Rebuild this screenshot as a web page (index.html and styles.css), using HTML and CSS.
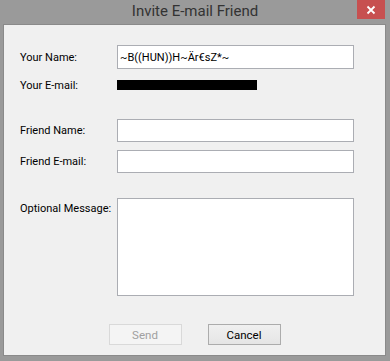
FILE: index.html
```html
<!DOCTYPE html>
<html>
<head>
<meta charset="utf-8">
<link rel="stylesheet" href="styles.css">
</head>
<body>
<div class="window">
  <div class="titlebar">
    <span></span>
    <div class="title">Invite E-mail Friend</div>
    <div class="close"><svg width="10" height="10" viewBox="0 0 10 10"><path d="M1.5 1.5 L8.5 8.5 M8.5 1.5 L1.5 8.5" stroke="#fff" stroke-width="1.8" fill="none"/></svg></div>
  </div>
  <div class="content">
    <div class="row row-name">
      <label class="label">Your Name:</label>
      <div class="input">~B((HUN))H~Är€sZ*~</div>
    </div>
    <div class="row row-email">
      <label class="label">Your E-mail:</label>
      <div class="redact-cell"><div class="redact"></div></div>
    </div>
    <div class="row row-fname">
      <label class="label">Friend Name:</label>
      <div class="input"></div>
    </div>
    <div class="row row-femail">
      <label class="label">Friend E-mail:</label>
      <div class="input"></div>
    </div>
    <div class="row row-msg">
      <label class="label label-top">Optional Message:</label>
      <div class="textarea"></div>
    </div>
    <div class="buttons">
      <button class="btn btn-disabled">Send</button>
      <button class="btn">Cancel</button>
    </div>
  </div>
</div>
</body>
</html>
```
FILE: styles.css
```css
html, body {
  margin: 0;
  padding: 0;
}
body {
  background: #9a9a9a;
  font-family: Roboto, "Noto Sans", sans-serif;
  font-size: 11px;
  color: #000;
}
.window {
  width: 390px;
  height: 361px;
  display: flex;
  flex-direction: column;
}
.titlebar {
  height: 24px;
  display: grid;
  grid-template-columns: 1fr auto 1fr;
  align-items: start;
}
.title {
  font-size: 15px;
  color: #333;
  line-height: 22px;
}
.close {
  justify-self: end;
  width: 28px;
  height: 19px;
  margin-right: 5px;
  background: #c75050;
  display: flex;
  align-items: center;
  justify-content: center;
}
.close svg { display: block; }
.content {
  margin: 0 4px 5px 3px;
  flex: 1;
  background: #f0f0f0;
  border: 1px solid #8a8a8a;
  display: flex;
  flex-direction: column;
  padding: 20px 0 0 16px;
}
.row {
  display: grid;
  grid-template-columns: 97px 237px;
}
.row-name { height: 24px; }
.row-email { height: 18px; margin-top: 7px; }
.row-fname { height: 23px; margin-top: 25px; }
.row-femail { height: 23px; margin-top: 8px; }
.row-msg { height: 98px; margin-top: 25px; }
.label {
  display: flex;
  align-items: center;
  color: #000;
}
.label-top {
  align-items: flex-start;
  padding-top: 4px;
}
.input, .textarea {
  background: #fff;
  border: 1px solid #abadb3;
  box-sizing: border-box;
}
.input {
  display: flex;
  align-items: center;
  padding-left: 2px;
  font-size: 11px;
}
.redact-cell {
  display: flex;
  align-items: center;
}
.redact {
  width: 140px;
  height: 10px;
  background: #000;
}
.buttons {
  display: flex;
  justify-content: center;
  gap: 26px;
  margin-top: 28px;
  padding-right: 16px;
}
.btn {
  width: 73px;
  height: 21px;
  font-family: inherit;
  font-size: 11.5px;
  border: 1px solid #acacac;
  background: linear-gradient(#f0f0f0, #e5e5e5);
  color: #000;
  padding: 0;
  margin: 0;
}
.btn-disabled {
  border-color: #d9d9d9;
  background: #f4f4f4;
  color: #a0a0a0;
}
```
